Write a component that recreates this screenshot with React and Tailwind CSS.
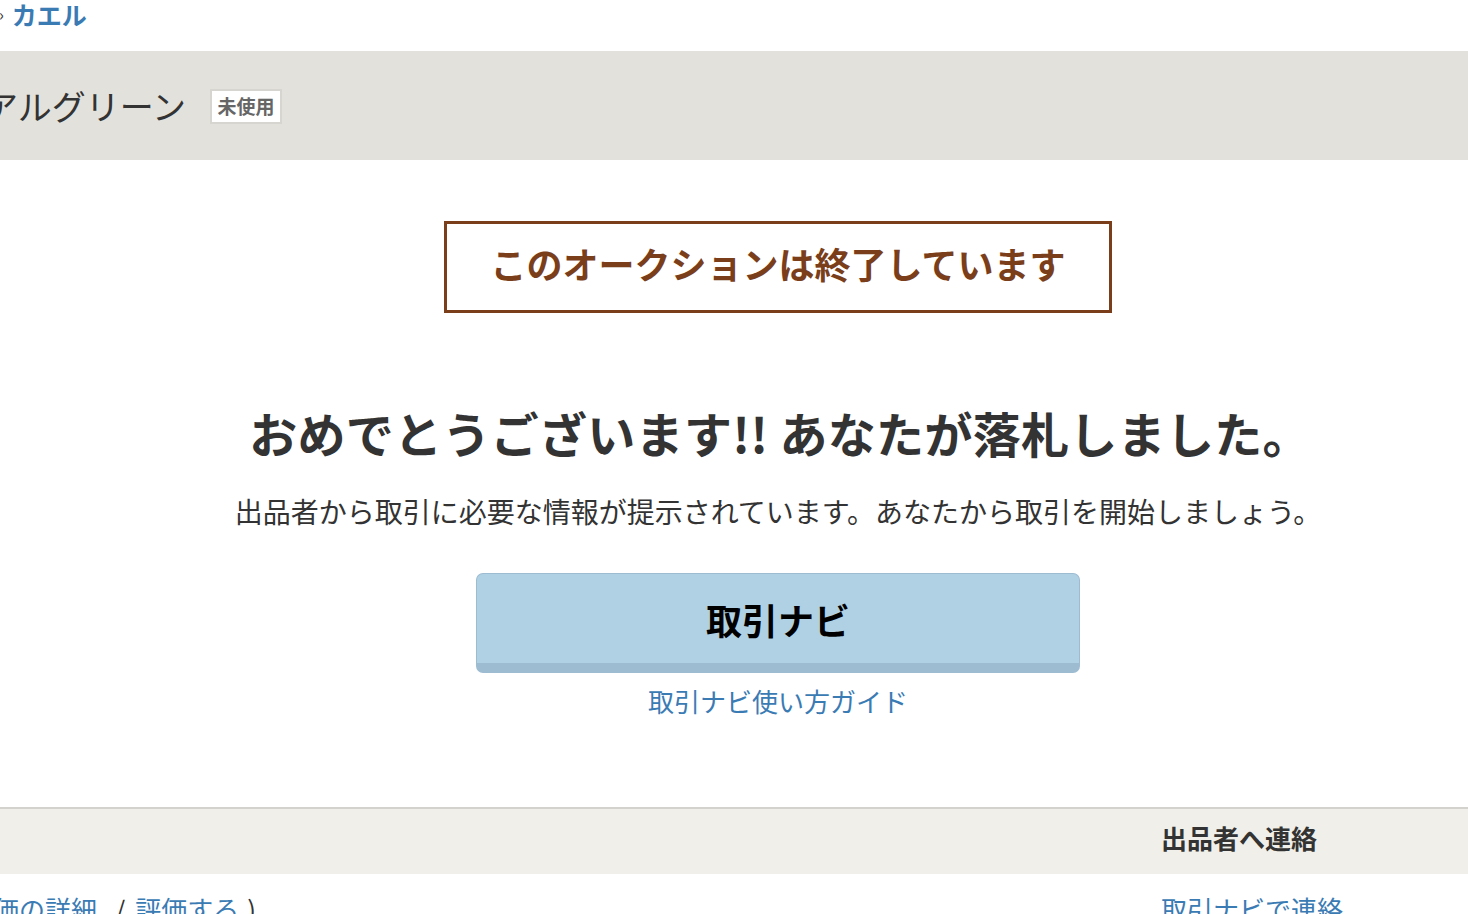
import React from "react";

const font = { fontFamily: '"Noto Sans CJK JP", "Noto Sans", sans-serif' };

export default function App() {
  return (
    <div className="w-[1468px] h-[914px] overflow-hidden bg-white text-[#333]" style={font}>
      {/* breadcrumb */}
      <div className="h-[51px] flex items-start">
        <div className="-mt-[4px] ml-[-1px] flex items-center gap-[8px] text-[25px] leading-[36px]">
          <span className="text-[#333] text-[16px]">›</span>
          <a className="font-bold text-[#3b7bb4]">カエル</a>
        </div>
      </div>

      {/* title band */}
      <div className="h-[109px] bg-[#e2e1dc] flex items-center">
        <h2 className="ml-[-16px] text-[34px] leading-[40px] font-normal text-[#333]">アルグリーン</h2>
        <span className="ml-[24px] mt-[2px] h-[35px] w-[72px] flex items-center justify-center bg-white border-2 border-[#d6d5d0] text-[19px] font-bold text-[#666]">
          未使用
        </span>
      </div>

      {/* main */}
      <div className="pl-[88px] flex flex-col items-center">
        <div className="mt-[61px] w-[668px] h-[92px] border-[3px] border-[#7a3e1a] flex items-center justify-center pb-[8px]">
          <span className="text-[36px] font-bold text-[#7a3e1a] leading-none">このオークションは終了しています</span>
        </div>

        <h1 className="mt-[89px] ml-[4px] text-[48px] leading-[60px] font-bold text-[#333] tracking-[0.3px]">
          おめでとうございます!! あなたが落札しました。
        </h1>

        <p className="mt-[29px] text-[28px] leading-[40px] text-[#333]">
          出品者から取引に必要な情報が提示されています。あなたから取引を開始しましょう。
        </p>

        <button className="mt-[42px] w-[604px] h-[100px] rounded-[7px] bg-[#b0d1e4] border border-[#9dbcd2] border-b-[10px] flex items-center justify-center text-[36px] font-bold text-black">
          取引ナビ
        </button>

        <a className="mt-[11px] text-[26px] leading-[34px] text-[#3b7bb4]">取引ナビ使い方ガイド</a>
      </div>

      {/* bottom band */}
      <div className="mt-[89px] border-t-2 border-[#d4d2cc] bg-[#f0efe9] h-[67px] flex items-center pb-[8px]">
        <div className="flex-1" />
        <div className="w-[307px] text-[26px] font-bold leading-[34px] text-[#333]">出品者へ連絡</div>
      </div>

      <div className="flex items-start pt-[18px]">
        <div className="flex-1 flex items-start text-[26px] leading-[34px] whitespace-nowrap">
          <span className="ml-[-33px] text-[#3b7bb4]">評価の詳細</span>
          <span className="ml-[18px] mr-[10px] text-[#333]">/</span>
          <span className="text-[#3b7bb4]">評価する</span>
          <span className="ml-[8px] text-[#333]">)</span>
        </div>
        <div className="w-[307px] text-[26px] leading-[34px] text-[#3b7bb4]">取引ナビで連絡</div>
      </div>
    </div>
  );
}
